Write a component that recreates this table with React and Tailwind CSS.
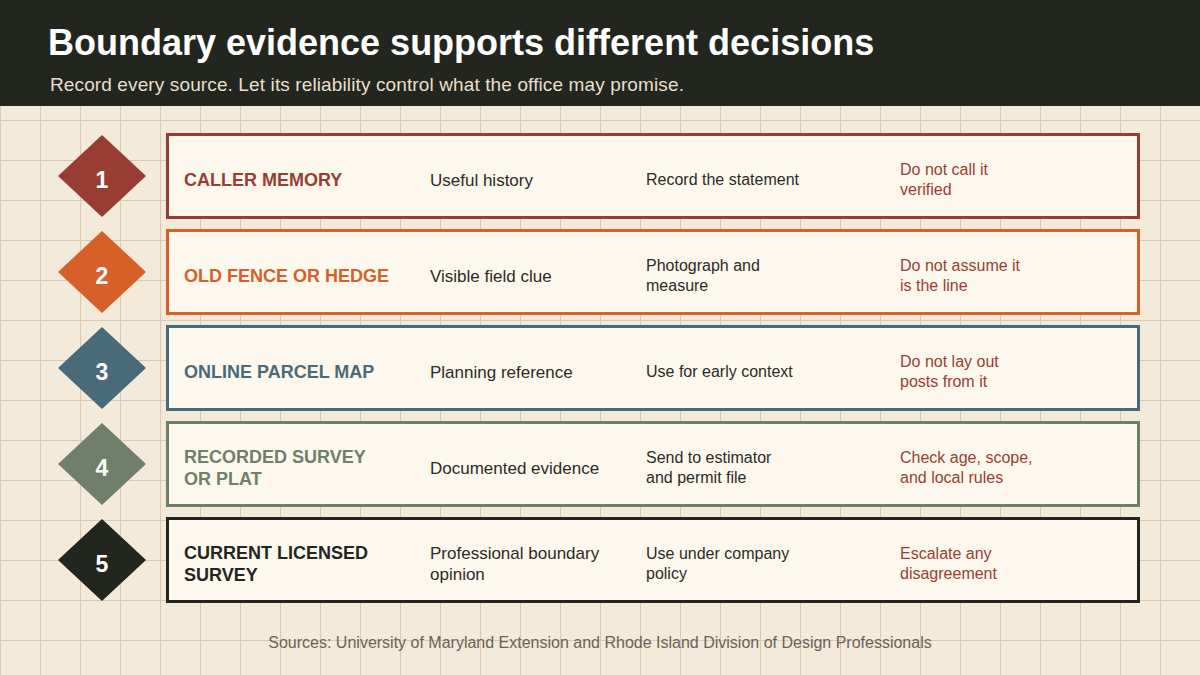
import React from 'react';

const rows = [
  { n: 1, color: '#983d33', label: 'Caller memory', use: 'Useful history', action: 'Record the statement', limit: 'Do not call it verified' },
  { n: 2, color: '#d75f2a', label: 'Old fence or hedge', use: 'Visible field clue', action: 'Photograph and measure', limit: 'Do not assume it is the line' },
  { n: 3, color: '#4a6a79', label: 'Online parcel map', use: 'Planning reference', action: 'Use for early context', limit: 'Do not lay out posts from it' },
  { n: 4, color: '#6f7f69', label: 'Recorded survey or plat', use: 'Documented evidence', action: 'Send to estimator and permit file', limit: 'Check age, scope, and local rules' },
  { n: 5, color: '#23261f', label: 'Current licensed survey', use: 'Professional boundary opinion', action: 'Use under company policy', limit: 'Escalate any disagreement' },
];

function Diamond({ n, color }) {
  return (
    <div className="relative w-[88px] h-[82px] shrink-0">
      <svg width="88" height="82" viewBox="0 0 88 82" className="absolute inset-0">
        <polygon points="44,0 88,41 44,82 0,41" fill={color} />
      </svg>
      <span className="absolute inset-0 flex items-center justify-center text-white font-bold text-[23px] pt-[8px]">{n}</span>
    </div>
  );
}

export default function App() {
  return (
    <div
      className="w-[1200px] h-[675px] overflow-hidden bg-[#f3eada] bg-[linear-gradient(to_right,#d8c9b0_1px,transparent_1px),linear-gradient(to_bottom,#d8c9b0_1px,transparent_1px)] bg-[size:40px_40px]"
      style={{ fontFamily: '"Liberation Sans", Arial, sans-serif' }}
    >
      <header className="h-[106px] bg-[#23261f] pl-[48px] pt-[21px]">
        <h1 className="text-white font-bold text-[36px] leading-[44px]">Boundary evidence supports different decisions</h1>
        <p className="text-[#e8dfcc] text-[19px] tracking-[0.12px] leading-[22px] mt-[9px] pl-[2px]">
          Record every source. Let its reliability control what the office may promise.
        </p>
      </header>

      <main className="pl-[58px] pt-[27px] flex flex-col gap-[10px]">
        {rows.map(r => (
          <div key={r.n} className="flex items-center gap-[20px]">
            <Diamond n={r.n} color={r.color} />
            <div
              className="w-[974px] h-[86px] border-[3px] bg-[#fdf8ee] flex items-center pl-[15px] pt-[8px] text-[16px] leading-[20px]"
              style={{ borderColor: r.color }}
            >
              <div className="w-[246px] shrink-0">
                <div className="w-[208px] font-bold uppercase text-[18px] leading-[22px]" style={{ color: r.color }}>
                  {r.label}
                </div>
              </div>
              <div className="w-[216px] shrink-0 text-[#2b2b26] text-[17px] leading-[21px]">
                <div className="w-[190px]">{r.use}</div>
              </div>
              <div className="w-[254px] shrink-0 text-[#2b2b26]">
                <div className="w-[154px]">{r.action}</div>
              </div>
              <div className="text-[#9b3d33]">
                <div className="w-[135px]">{r.limit}</div>
              </div>
            </div>
          </div>
        ))}
      </main>

      <footer className="text-center text-[#6a6358] text-[16px] mt-[28px]">
        Sources: University of Maryland Extension and Rhode Island Division of Design Professionals
      </footer>
    </div>
  );
}
